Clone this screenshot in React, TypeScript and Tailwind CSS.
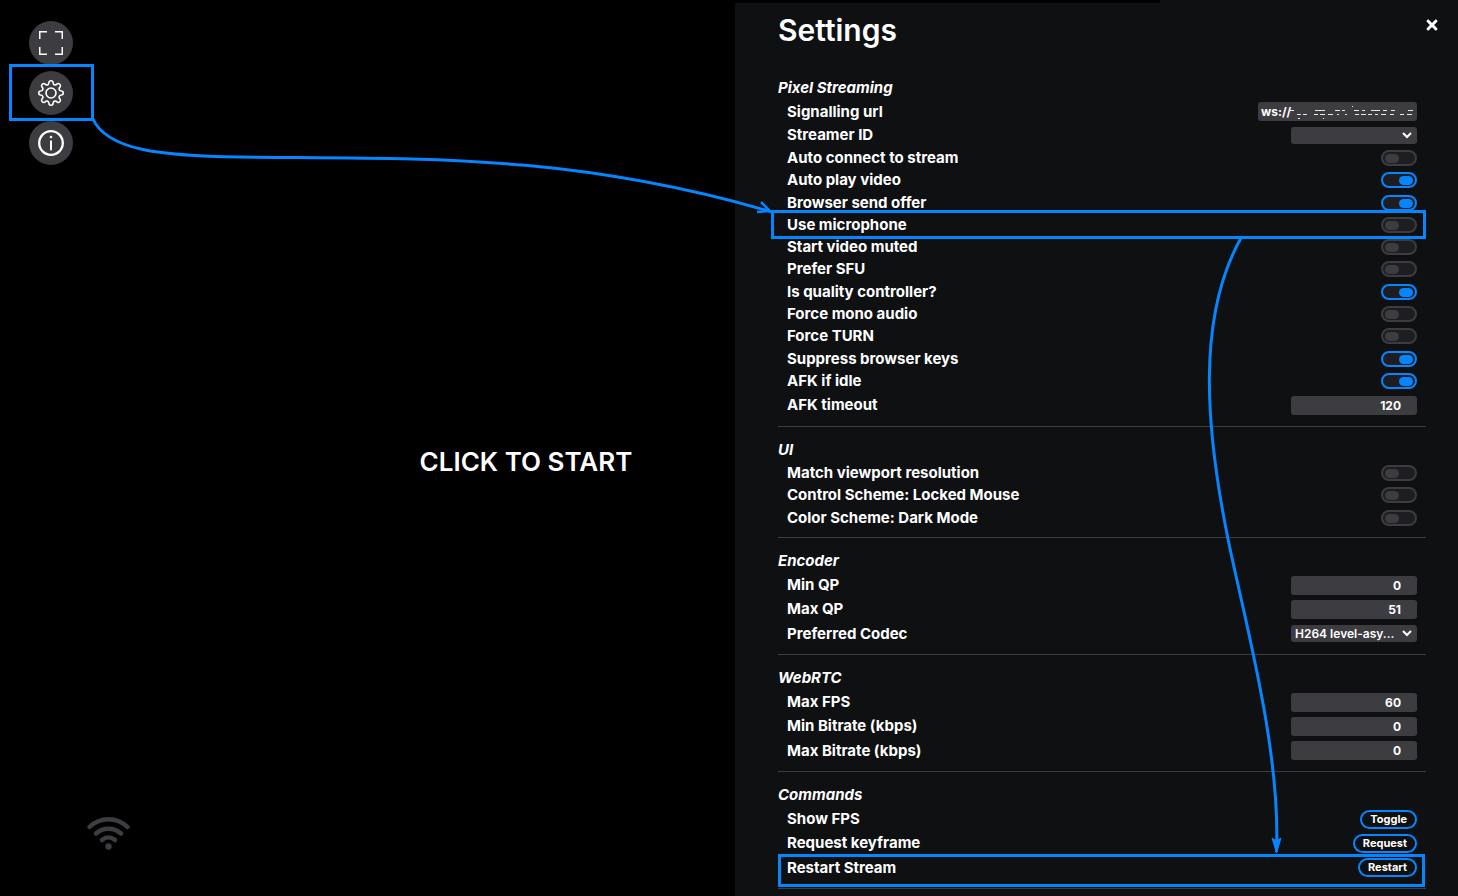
import { useId, useState, type ReactNode } from "react";
import { FaTimes } from "react-icons/fa";

function Row({ label, id, children }: { label: string; id: string; children: ReactNode }) {
  return (
    <div className="flex items-center justify-between px-[9px]">
      <label htmlFor={id}>{label}</label>
      {children}
    </div>
  );
}

function ToggleRow({ label, on = false }: { label: string; on?: boolean }) {
  const id = useId();
  const [checked, setChecked] = useState(on);
  return (
    <Row label={label} id={id}>
      <input
        id={id}
        type="checkbox"
        checked={checked}
        onChange={(e) => setChecked(e.target.checked)}
        className="h-4 w-9 appearance-none rounded-full border-2 border-[#3d3c40] bg-[#1e1d22] p-[2px] before:block before:h-[9px] before:w-[14px] before:rounded-full before:bg-[#3d3c40] before:content-[''] checked:border-[#0585fe] checked:before:ml-[14px] checked:before:bg-[#0585fe]"
      />
    </Row>
  );
}

function NumberRow({ label, value }: { label: string; value: string }) {
  const id = useId();
  return (
    <Row label={label} id={id}>
      <input
        id={id}
        type="text"
        inputMode="numeric"
        defaultValue={value}
        className="h-[19px] w-[126px] rounded-[3px] bg-[#3d3c40] pr-4 text-right text-xs font-bold"
      />
    </Row>
  );
}

function SelectRow({ label, option }: { label: string; option: string }) {
  const id = useId();
  return (
    <Row label={label} id={id}>
      <span className="relative flex">
        <select
          id={id}
          className="h-[17px] w-[126px] appearance-none rounded-[3px] bg-[#3d3c40] pl-1 text-xs leading-4 font-semibold"
        >
          <option>{option}</option>
        </select>
        <svg
          className="pointer-events-none absolute top-[5px] right-[5px]"
          width="10"
          height="7"
          viewBox="0 0 10 7"
          fill="none"
          stroke="#fff"
          strokeWidth="2"
        >
          <path d="M1 1l4 4 4-4" />
        </svg>
      </span>
    </Row>
  );
}

function CommandRow({ label, action }: { label: string; action: string }) {
  const id = useId();
  return (
    <Row label={label} id={id}>
      <button
        id={id}
        type="button"
        className="h-[19px] rounded-full border-2 border-[#0585fe] px-2 text-[11px] leading-[15px] font-bold"
      >
        {action}
      </button>
    </Row>
  );
}

function Section({ title, children }: { title: string; children: ReactNode }) {
  return (
    <section className="border-b border-[#3d3c40] pt-[11px] pb-2">
      <h2 className="h-6 leading-6 italic">{title}</h2>
      {children}
    </section>
  );
}

function RoundButton({ label, children }: { label: string; children: ReactNode }) {
  return (
    <button
      type="button"
      aria-label={label}
      className="flex size-11 items-center justify-center rounded-full bg-[#3d3c40]"
    >
      {children}
    </button>
  );
}

function SignallingRow() {
  const id = useId();
  return (
    <Row label="Signalling url" id={id}>
      <span className="relative flex">
        <input
          id={id}
          type="text"
          defaultValue="ws://"
          className="h-[19px] w-[159px] rounded-[3px] bg-[#3d3c40] pl-[3px] text-xs font-bold"
        />
        <svg
          className="pointer-events-none absolute top-0 left-8"
          width="127"
          height="19"
          viewBox="0 0 127 19"
          fill="none"
          stroke="#e8e8e8"
        >
          <path d="M0 8.500h4M25 8.500h10M45 8.500h5M52 8.500h3M64 8.500h5M72 8.500h3M81 8.500h9M93 8.500h4M101 8.500h4M118 8.500h5" />
          <path d="M7 12.500h4M13 12.500h4M24 12.500h4M30 12.500h5M38 12.500h5M47 12.500h2M55 12.500h2M65 12.500h4M71 12.500h5M78 12.500h4M85 12.500h3M91 12.500h5M100 12.500h4M110 12.500h4M117 12.500h5" />
          <path d="M8 16.500h2M33 16.500h1M62 4.500h1" />
        </svg>
      </span>
    </Row>
  );
}

export default function App() {
  return (
    <div className="relative grid min-h-screen grid-cols-[735fr_723fr] overflow-hidden bg-black font-['Inter',sans-serif] text-[15px] leading-5 font-bold text-white">
      <main className="relative flex flex-col">
        <nav className="absolute top-[21px] left-[29px] flex flex-col gap-[6px]">
          <RoundButton label="Full screen">
            <svg width="24" height="24" viewBox="0 0 24 24" fill="none" stroke="#fff" strokeWidth="1.500">
              <path d="M.75 8V.75H8M16 .75h7.250V8M23.250 16v7.250H16M8 23.250H.75V16" />
            </svg>
          </RoundButton>
          <RoundButton label="Settings">
            <svg width="28" height="28" viewBox="0 0 28 28" fill="none" stroke="#fff" strokeWidth="1.600" strokeLinejoin="round">
              <circle cx="14" cy="14" r="5" />
              <path d="M12 3.500Q12 1.800 14 1.800T16 3.500Q16.200 5.600 17.600 5.900T20.200 4.900Q21.600 4 22.800 5.200T23.100 7.800Q21.800 9 22.100 10.400T24.500 12Q26.200 12 26.200 14T24.500 16Q22.400 16.200 22.100 17.600T23.100 20.200Q24 21.600 22.800 22.800T20.200 23.100Q19 21.800 17.600 22.100T16 24.500Q16 26.200 14 26.200T12 24.500Q11.800 22.400 10.400 22.100T7.800 23.100Q6.400 24 5.200 22.800T4.900 20.200Q6.200 19 5.900 17.600T3.500 16Q1.800 16 1.800 14T3.500 12Q5.600 11.800 5.900 10.400T4.900 7.800Q4 6.400 5.200 5.200T7.800 4.900Q9 6.200 10.400 5.900T12 3.500Z" />
            </svg>
          </RoundButton>
          <RoundButton label="Information">
            <svg width="28" height="28" viewBox="0 0 28 28" fill="none" stroke="#fff" strokeWidth="2.300">
              <circle cx="14" cy="14" r="11.800" />
              <path d="M14 12.200v8.300" strokeWidth="2" strokeLinecap="round" />
              <circle cx="14" cy="8" r="1.300" fill="#fff" stroke="none" />
            </svg>
          </RoundButton>
        </nav>
        <div className="flex flex-1 items-center justify-center pt-7 pl-[317px]">
          <button type="button" className="text-[26px] leading-8 font-semibold whitespace-nowrap">
            CLICK TO START
          </button>
        </div>
        <svg
          className="absolute bottom-[45px] left-[86px]"
          width="45"
          height="35"
          viewBox="0 0 45 35"
          fill="none"
          stroke="#3d3c40"
          strokeWidth="4.500"
          strokeLinecap="round"
        >
          <path d="M3.500 11C14 .5 31 .5 41.500 11M10 17.500C17 11 28 11 35 17.500M16 24C20 20.500 25 20.500 29 24" />
          <circle cx="22.500" cy="30.500" r="3.200" fill="#3d3c40" stroke="none" />
        </svg>
      </main>

      <aside className="relative bg-[#0f1012] pr-8 pb-1 pl-[43px]">
        <div className="absolute top-0 left-0 h-[3px] w-[425px] bg-black" />
        <header className="flex h-[65px] items-start justify-between pt-3">
          <h1 className="text-[30px] leading-9 font-semibold">Settings</h1>
          <button type="button" aria-label="Close" className="-mr-[14px] pt-[5px]">
            <FaTimes size={16} />
          </button>
        </header>

        <Section title="Pixel Streaming">
          <div className="grid min-h-[47px] auto-rows-fr">
            <SignallingRow />
            <SelectRow label="Streamer ID" option="" />
          </div>
          <div className="grid min-h-[245px] auto-rows-fr">
            <ToggleRow label="Auto connect to stream" />
            <ToggleRow label="Auto play video" on />
            <ToggleRow label="Browser send offer" on />
            <ToggleRow label="Use microphone" />
            <ToggleRow label="Start video muted" />
            <ToggleRow label="Prefer SFU" />
            <ToggleRow label="Is quality controller?" on />
            <ToggleRow label="Force mono audio" />
            <ToggleRow label="Force TURN" />
            <ToggleRow label="Suppress browser keys" on />
            <ToggleRow label="AFK if idle" on />
          </div>
          <div className="grid min-h-[26px]">
            <NumberRow label="AFK timeout" value="120" />
          </div>
        </Section>

        <Section title="UI">
          <div className="grid min-h-[67px] auto-rows-fr">
            <ToggleRow label="Match viewport resolution" />
            <ToggleRow label="Control Scheme: Locked Mouse" />
            <ToggleRow label="Color Scheme: Dark Mode" />
          </div>
        </Section>

        <Section title="Encoder">
          <div className="grid min-h-[73px] auto-rows-fr">
            <NumberRow label="Min QP" value="0" />
            <NumberRow label="Max QP" value="51" />
            <SelectRow label="Preferred Codec" option="H264 level-asy..." />
          </div>
        </Section>

        <Section title="WebRTC">
          <div className="grid min-h-[73px] auto-rows-fr">
            <NumberRow label="Max FPS" value="60" />
            <NumberRow label="Min Bitrate (kbps)" value="0" />
            <NumberRow label="Max Bitrate (kbps)" value="0" />
          </div>
        </Section>

        <Section title="Commands">
          <div className="grid min-h-[73px] auto-rows-fr">
            <CommandRow label="Show FPS" action="Toggle" />
            <CommandRow label="Request keyframe" action="Request" />
            <CommandRow label="Restart Stream" action="Restart" />
          </div>
        </Section>
      </aside>

      <svg
        className="pointer-events-none absolute top-0 left-0"
        width="1458"
        height="896"
        viewBox="0 0 1458 896"
        fill="none"
        stroke="#0585fe"
        strokeWidth="3"
      >
        <rect x="10.500" y="65.500" width="82" height="54" />
        <rect x="772.500" y="211.500" width="652" height="26" />
        <rect x="779.500" y="855.500" width="644" height="30" />
        <path d="M93 119C107 150 160 156 240 157C420 159 570 153 772 212" />
        <path d="M1241 238C1196 318 1206 430 1228 539C1244 618 1281 750 1276.500 852" />
        <path d="M757 212L770 211L761 202" strokeWidth="2.500" />
        <path d="M1272 838L1276.500 853L1281 838L1276.500 841Z" fill="#0585fe" strokeWidth="1" />
      </svg>
    </div>
  );
}
